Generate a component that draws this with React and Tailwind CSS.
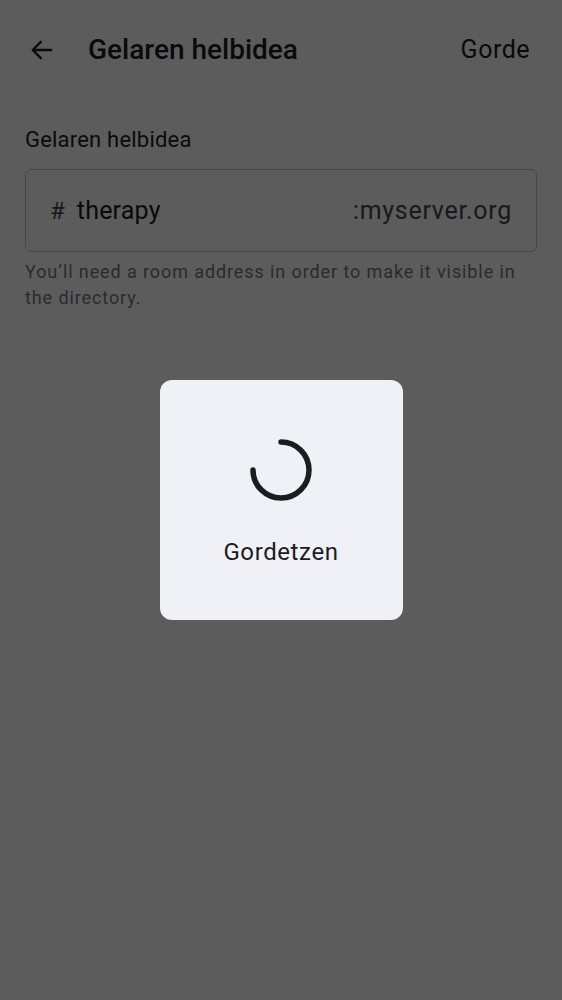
import React from 'react'

const Spinner = () => (
  <svg width="64" height="64" viewBox="0 0 64 64" fill="none">
    <path d="M32 4 A28 28 0 1 1 4 32" stroke="#1b1c20" strokeWidth="5.5" strokeLinecap="round" />
  </svg>
)

const App = () => {
  return (
    <div className="relative min-h-screen bg-white font-['Roboto',sans-serif] text-[#1b1c20]">
      {/* Top bar */}
      <div className="flex items-center h-[100px] px-[28px]">
        <svg width="28" height="28" viewBox="0 0 24 24" fill="none" className="shrink-0">
          <path d="M20 12H4.5M11 5l-7 7 7 7" stroke="#1b1c20" strokeWidth="2" strokeLinecap="round" strokeLinejoin="round" />
        </svg>
        <h1 className="ml-[32px] text-[28px] font-medium">Gelaren helbidea</h1>
        <button className="ml-auto mr-[4px] text-[25px] tracking-[0.5px]">Gorde</button>
      </div>

      {/* Form */}
      <div className="px-[25px] pt-[24px]">
        <label className="block text-[22px] leading-[32px] tracking-[0.2px]">Gelaren helbidea</label>
        <div className="mt-[13px] flex items-center h-[83px] rounded-[6px] border border-[#c4c6cf] px-[24px]">
          <span className="text-[24px] text-[#44464f]">#</span>
          <span className="ml-[12px] text-[25px] tracking-[0.2px]">therapy</span>
          <span className="ml-auto text-[25px] tracking-[0.7px] text-[#44464f]">:myserver.org</span>
        </div>
        <p className="mt-[7px] text-[18px] leading-[26px] tracking-[0.9px] text-[#76777f]">
          You’ll need a room address in order to make it visible in the directory.
        </p>
      </div>

      {/* Scrim + progress dialog */}
      <div className="fixed inset-0 bg-black/[0.64] flex items-start justify-center pt-[380px]">
        <div className="w-[243px] h-[240px] rounded-[12px] bg-[#f0f1f6] flex flex-col items-center">
          <div className="mt-[58px]">
            <Spinner />
          </div>
          <div className="mt-[32px] text-[24px] tracking-[0.6px]">Gordetzen</div>
        </div>
      </div>
    </div>
  )
}

export default App
